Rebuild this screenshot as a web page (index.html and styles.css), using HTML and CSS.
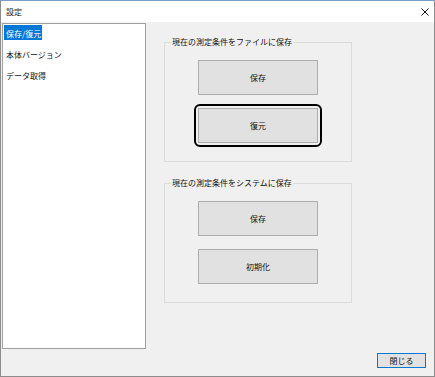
FILE: index.html
```html
<!DOCTYPE html>
<html lang="ja">
<head>
    <meta charset="UTF-8" />
    <title>設定</title>
    <link rel="stylesheet" href="styles.css">
</head>
<body>
<div class="window">
    <div class="titlebar">
        <span class="title">設定</span>
        <span class="close-x">
            <svg width="8" height="8" viewBox="0 0 8 8">
                <path d="M0.5 0.5 L7.5 7.5 M7.5 0.5 L0.5 7.5" stroke="#111" stroke-width="1" fill="none"/>
            </svg>
        </span>
    </div>
    <div class="client">
        <div class="main">
            <ul class="nav-list">
                <li class="nav-item"><span class="nav-label selected">保存/復元</span></li>
                <li class="nav-item"><span class="nav-label">本体バージョン</span></li>
                <li class="nav-item"><span class="nav-label">データ取得</span></li>
            </ul>
            <div class="groups">
                <fieldset class="group">
                    <legend>現在の測定条件をファイルに保存</legend>
                    <button class="btn">保存</button>
                    <button class="btn focused">復元</button>
                </fieldset>
                <fieldset class="group">
                    <legend>現在の測定条件をシステムに保存</legend>
                    <button class="btn">保存</button>
                    <button class="btn">初期化</button>
                </fieldset>
            </div>
        </div>
        <div class="footer">
            <button class="btn-close">閉じる</button>
        </div>
    </div>
</div>
</body>
</html>
```

FILE: styles.css
```css
html, body {
    margin: 0;
    padding: 0;
}

body {
    font-family: "Noto Sans CJK JP", "Noto Sans", sans-serif;
    font-size: 8px;
    color: #000;
    background: #f0f0f0;
}

.window {
    width: 435px;
    height: 377px;
    box-sizing: border-box;
    border: 1px solid #8c8c8c;
    border-top-color: #7a9cc6;
    display: flex;
    flex-direction: column;
    background: #f0f0f0;
}

.titlebar {
    height: 21px;
    background: #fff;
    display: flex;
    align-items: center;
    justify-content: space-between;
    padding: 0 5px 0 5px;
}

.title {
    font-size: 8px;
    color: #222;
}

.close-x {
    display: flex;
}

.client {
    flex: 1;
    display: flex;
    flex-direction: column;
    padding: 1px 1px 0 1px;
}

.main {
    display: flex;
    align-items: flex-start;
}

.nav-list {
    width: 144px;
    height: 326px;
    box-sizing: border-box;
    border: 1px solid #a0a0a0;
    background: #fff;
    margin: 0;
    padding: 1px;
    list-style: none;
}

.nav-item {
    height: 21px;
}

.nav-label {
    display: inline-block;
    box-sizing: border-box;
    height: 15px;
    padding: 3px 1px 0 2px;
    line-height: 12px;
    color: #111;
}

.nav-label.selected {
    background: #0078d7;
    color: #fff;
}

.groups {
    margin-left: 18px;
    margin-top: 14px;
}

.group {
    width: 188px;
    box-sizing: border-box;
    min-width: 0;
    margin: 0 0 16px 0;
    padding: 13px 0 18px 0;
    border: 1px solid #dcdcdc;
}

.group legend {
    margin-left: 6px;
    padding: 0 1px;
    line-height: 10px;
    color: #111;
}

.btn {
    display: block;
    width: 120px;
    height: 35px;
    margin: 0 auto;
    padding: 0;
    background: #e1e1e1;
    border: 1px solid #adadad;
    font-family: inherit;
    font-size: 8px;
    color: #111;
}

.btn + .btn {
    margin-top: 13px;
}

.btn.focused {
    position: relative;
}

.btn.focused::after {
    content: "";
    position: absolute;
    inset: -5px;
    border: 2px solid #000;
    border-radius: 6px;
}

.footer {
    display: flex;
    justify-content: flex-end;
    margin-top: 4px;
    padding-right: 7px;
}

.btn-close {
    width: 49px;
    height: 15px;
    padding: 0;
    background: #e1e1e1;
    border: 1px solid #0078d7;
    font-family: inherit;
    font-size: 8px;
    line-height: 13px;
    color: #111;
}
```
